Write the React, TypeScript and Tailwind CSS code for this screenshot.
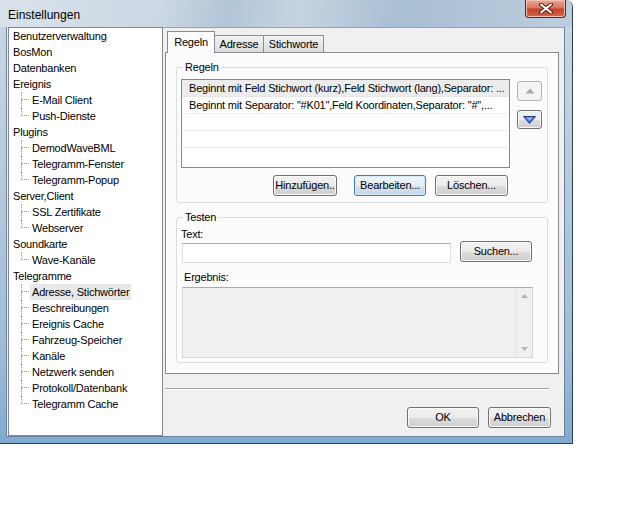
import React from "react";

type Node = { label: string; children?: string[] };

const tree: Node[] = [
  { label: "Benutzerverwaltung" },
  { label: "BosMon" },
  { label: "Datenbanken" },
  { label: "Ereignis", children: ["E-Mail Client", "Push-Dienste"] },
  { label: "Plugins", children: ["DemodWaveBML", "Telegramm-Fenster", "Telegramm-Popup"] },
  { label: "Server,Client", children: ["SSL Zertifikate", "Webserver"] },
  { label: "Soundkarte", children: ["Wave-Kanäle"] },
  {
    label: "Telegramme",
    children: [
      "Adresse, Stichwörter",
      "Beschreibungen",
      "Ereignis Cache",
      "Fahrzeug-Speicher",
      "Kanäle",
      "Netzwerk senden",
      "Protokoll/Datenbank",
      "Telegramm Cache",
    ],
  },
];

const btn =
  "flex items-center justify-center rounded-[3px] border border-[#707070] bg-[linear-gradient(#f2f2f2_0%,#ebebeb_50%,#dddddd_51%,#cfcfcf_100%)] shadow-[inset_0_0_0_1px_#fbfbfb] text-black";

export default function App() {
  return (
    <div
      className="h-[512px] w-[640px] bg-white text-[11px] tracking-[-0.2px] text-black"
      style={{ fontFamily: '"Liberation Sans", Arial, sans-serif' }}
    >
      <div className="flex h-[444px] w-[573px] flex-col overflow-hidden rounded-tr-[7px] border-r border-b border-[#2f3f52] bg-[linear-gradient(180deg,#cbd8e5_0%,#b6cade_40%,#9dbcd8_80%,#7fabd2_100%)]">
        {/* title bar */}
        <div className="flex h-[27px] shrink-0 items-start justify-between bg-[linear-gradient(100deg,#d9e2eb_0%,#ccd8e4_28%,#b2c5d7_40%,#c6d4e1_52%,#a8bed3_70%,#bccddd_100%)]">
          <div className="pt-[6px] pl-[8px] text-[12px] tracking-normal text-black">Einstellungen</div>
          <div className="mr-[6px] flex h-[18px] w-[41px] items-center justify-center rounded-b-[4px] border border-t-0 border-[#5b2318] bg-[linear-gradient(180deg,#e9a892_0%,#d9775d_45%,#c4422a_55%,#d2684c_100%)] shadow-[inset_0_0_0_1px_#f3c2b2]">
            <svg width="14" height="11" viewBox="0 0 14 11">
              <path d="M2 1.5 L12 9.5 M12 1.5 L2 9.5" stroke="#5a2015" strokeWidth="4" strokeLinecap="round" />
              <path d="M2 1.5 L12 9.5 M12 1.5 L2 9.5" stroke="#ffffff" strokeWidth="2" strokeLinecap="round" />
            </svg>
          </div>
        </div>

        {/* client area */}
        <div className="ml-[6px] mr-[7px] mb-[6px] flex min-h-0 flex-1 border-x border-b border-[#6e8196] bg-[#f0f0f0]">
          {/* tree */}
          <div className="ml-[1px] w-[155px] shrink-0 border border-[#828790] bg-white pl-[4px]">
            {tree.map((n) => (
              <div key={n.label}>
                <div className="h-[16px] leading-[16px]">{n.label}</div>
                {n.children?.map((c, i) => {
                  const last = i === n.children!.length - 1;
                  const selected = c === "Adresse, Stichwörter";
                  return (
                    <div key={c} className="flex h-[16px]">
                      <div className="flex w-[17px] flex-col">
                        <div className="ml-[8px] h-[8px] w-[8px] border-b border-l border-dotted border-[#9a9a9a]" />
                        <div className={"ml-[8px] h-[8px] " + (last ? "" : "border-l border-dotted border-[#9a9a9a]")} />
                      </div>
                      <div className={"h-[16px] px-[2px] leading-[16px] " + (selected ? "bg-[#e8e8e8]" : "")}>{c}</div>
                    </div>
                  );
                })}
              </div>
            ))}
          </div>

          {/* right panel */}
          <div className="flex flex-1 flex-col border-t border-[#a0a0a0]">
            <div className="mt-[3px] ml-[2px] w-[394px]">
              {/* tabs */}
              <div className="flex h-[21px] items-end pl-[2px]">
                <div className="relative z-10 -mb-px flex h-[22px] w-[48px] items-start justify-center border border-b-0 border-[#898c95] bg-[#fcfcfc] pt-[2px]">
                  Regeln
                </div>
                <div className="flex h-[17px] w-[49px] items-center justify-center border border-b-0 border-l-0 border-[#898c95] bg-[linear-gradient(#f3f3f3,#dcdcdc)]">
                  Adresse
                </div>
                <div className="flex h-[17px] w-[60px] items-center justify-center border border-b-0 border-l-0 border-[#898c95] bg-[linear-gradient(#f3f3f3,#dcdcdc)]">
                  Stichworte
                </div>
              </div>

              {/* tab page */}
              <div className="h-[322px] border border-[#898c95] bg-[#fcfcfc] pl-[10px]">
                <fieldset className="mt-[7px] w-[372px] rounded-[3px] border border-[#d5dfe5] px-[4px] pb-[6px]">
                  <legend className="ml-[2px] px-[2px] leading-[14px]">Regeln</legend>
                  <div className="mt-[5px] flex">
                    <div className="h-[89px] w-[329px] border border-[#828790] bg-white">
                      <div className="h-[17px] overflow-hidden border-b border-[#e6e6e6] bg-[#ececec] pl-[7px] leading-[17px] whitespace-nowrap">
                        Beginnt mit Feld Stichwort (kurz),Feld Stichwort (lang),Separator: ...
                      </div>
                      <div className="h-[17px] overflow-hidden border-b border-[#eeeeee] pl-[7px] leading-[17px] whitespace-nowrap">
                        Beginnt mit Separator: "#K01",Feld Koordinaten,Separator: "#",...
                      </div>
                      <div className="h-[17px] border-b border-[#eeeeee]" />
                      <div className="h-[17px] border-b border-[#eeeeee]" />
                      <div className="h-[17px]" />
                    </div>
                    <div className="mt-[2px] ml-[7px] flex flex-col gap-[9px]">
                      <div className="flex h-[20px] w-[25px] items-center justify-center rounded-[3px] border border-[#adb2b5] bg-[#f4f4f4]">
                        <svg width="10" height="6" viewBox="0 0 10 6">
                          <path d="M0.5 5.5 L5 0.5 L9.5 5.5 Z" fill="#a6a6a6" />
                        </svg>
                      </div>
                      <div className={btn + " h-[19px] w-[25px]"}>
                        <svg width="13" height="8" viewBox="0 0 13 8">
                          <path d="M0.5 0.5 L12.5 0.5 L6.5 7.5 Z" fill="#3d74d8" stroke="#1b3f86" strokeWidth="1" strokeLinejoin="round" />
                          <path d="M3 1.6 L10 1.6 L6.5 4.5 Z" fill="#9cc3f5" />
                        </svg>
                      </div>
                    </div>
                  </div>
                  <div className="mt-[7px] flex">
                    <div className={btn + " ml-[92px] h-[21px] w-[64px]"}>Hinzufügen..</div>
                    <div className="ml-[17px] flex h-[21px] w-[72px] items-center justify-center rounded-[3px] border border-[#3c7fb1] bg-[linear-gradient(#f0f5f8_0%,#e6eef4_50%,#d5e2ec_51%,#c8d8e4_100%)] shadow-[inset_0_0_0_1px_#d6ecf8]">
                      Bearbeiten...
                    </div>
                    <div className={btn + " ml-[9px] h-[21px] w-[73px]"}>Löschen...</div>
                  </div>
                </fieldset>

                <fieldset className="mt-[7px] w-[372px] rounded-[3px] border border-[#d5dfe5] px-[4px] pb-[4px]">
                  <legend className="ml-[2px] px-[2px] leading-[14px]">Testen</legend>
                  <div className="mt-[3px] leading-[14px]">Text:</div>
                  <div className="flex items-start">
                    <div className="mt-[2px] ml-[1px] h-[20px] w-[269px] border border-[#dbdfe6] border-t-[#abadb3] bg-white" />
                    <div className={btn + " ml-[9px] h-[21px] w-[72px]"}>Suchen...</div>
                  </div>
                  <div className="mt-[7px] ml-[3px] leading-[14px]">Ergebnis:</div>
                  <div className="mt-[3px] ml-[1px] flex h-[71px] w-[351px] border border-[#d4d7dc] border-t-[#a9abb0] bg-[#f0f0f0]">
                    <div className="flex-1" />
                    <div className="flex w-[17px] flex-col items-center justify-between border-l border-[#e4e4e4] py-[6px]">
                      <svg width="7" height="4" viewBox="0 0 7 4">
                        <path d="M0 4 L3.5 0 L7 4 Z" fill="#b4b4b4" />
                      </svg>
                      <svg width="7" height="4" viewBox="0 0 7 4">
                        <path d="M0 0 L7 0 L3.5 4 Z" fill="#b4b4b4" />
                      </svg>
                    </div>
                  </div>
                </fieldset>
              </div>
            </div>

            {/* separator */}
            <div className="mt-[14px] ml-[2px] w-[384px] border-t border-b border-t-[#a0a0a0] border-b-white" />

            {/* dialog buttons */}
            <div className="mt-[17px] flex justify-end pr-[13px]">
              <div className={btn + " h-[21px] w-[72px]"}>OK</div>
              <div className={btn + " ml-[9px] h-[21px] w-[63px]"}>Abbrechen</div>
            </div>
          </div>
        </div>
      </div>
    </div>
  );
}
